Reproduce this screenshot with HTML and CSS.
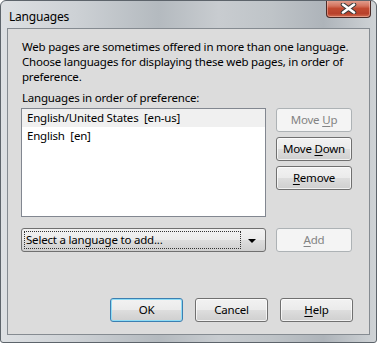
FILE: index.html
```html
<!DOCTYPE html>
<html>
<head>
    <meta charset="UTF-8">
    <title>Languages</title>
    <link rel="stylesheet" href="styles.css">
</head>
<body>
<div class="win">
    <div class="win-title">
        <span class="win-caption">Languages</span>
        <span class="win-close">
            <svg width="17" height="11" viewBox="0 0 17 11">
                <path d="M3 1.5 L14 9.5 M14 1.5 L3 9.5" stroke="#3b3b3b" stroke-width="4.6" stroke-linecap="round"/>
                <path d="M3 1.5 L14 9.5 M14 1.5 L3 9.5" stroke="#ffffff" stroke-width="2.6" stroke-linecap="round"/>
            </svg>
        </span>
    </div>
    <div class="win-client">
        <p class="lg-desc">Web pages are sometimes offered in more than one language.<br>Choose languages for displaying these web pages, in order of<br>preference.</p>
        <div class="lg-label">Languages in order of preference:</div>
        <div class="lg-grid">
            <ul class="lg-list">
                <li class="lg-item sel">English/United States&nbsp; [en-us]</li>
                <li class="lg-item">English&nbsp; [en]</li>
            </ul>
            <div class="lg-side">
                <span class="btn off">Move <u>U</u>p</span>
                <span class="btn">Move <u>D</u>own</span>
                <span class="btn"><u>R</u>emove</span>
            </div>
            <div class="combo">
                <span class="combo-text">Select a language to add...</span>
                <span class="combo-arrow"></span>
            </div>
            <div class="lg-side">
                <span class="btn off"><u>A</u>dd</span>
            </div>
        </div>
        <div class="lg-foot">
            <span class="btn def">OK</span>
            <span class="btn">Cancel</span>
            <span class="btn"><u>H</u>elp</span>
        </div>
    </div>
</div>
</body>
</html>
```

FILE: styles.css
```css
body, p, ul, li, div {
    margin: 0;
    padding: 0;
}
body {
    font-family: "Noto Sans", "Open Sans", sans-serif;
    font-size: 11.5px;
    letter-spacing: -0.2px;
    color: #000;
    background: #fff;
}

.win {
    width: 377px;
    height: 343px;
    box-sizing: border-box;
    border: 1px solid #5d646b;
    border-radius: 6px 6px 3px 3px;
    background: linear-gradient(to right, #dde0e3 0, #cdd1d5 20%, #b4babf 42%, #c8ccd0 58%, #bfc4c8 72%, #aeb4ba 86%, #cfd3d6 100%);
    display: flex;
    flex-direction: column;
    overflow: hidden;
}
.win-title {
    height: 27px;
    display: flex;
    justify-content: space-between;
    align-items: flex-start;
    padding-left: 8px;
}
.win-caption {
    font-size: 12px;
    line-height: 14px;
    margin-top: 9px;
    color: #000;
}
.win-close {
    width: 45px;
    height: 18px;
    margin-top: -1px;
    margin-right: 5px;
    box-sizing: border-box;
    border: 1px solid #4b2b27;
    border-top: 0;
    border-radius: 0 0 4px 4px;
    background: linear-gradient(to bottom, #e3a595 0, #d4735e 35%, #c14a31 50%, #b8412b 80%, #d06d51 100%);
    box-shadow: inset 0 0 0 1px rgba(255, 210, 200, 0.45);
    display: flex;
    align-items: center;
    justify-content: center;
}
.win-client {
    flex: 1;
    margin: 0 6px 7px 6px;
    border: 1px solid #858b91;
    background: #dcdcdc;
    padding: 10px 16px 0 13px;
    display: flex;
    flex-direction: column;
}

.lg-desc {
    line-height: 15px;
    padding-left: 1px;
    white-space: nowrap;
}
.lg-label {
    line-height: 15px;
    margin-top: 6px;
    padding-left: 1px;
}
.lg-grid {
    margin-top: 3px;
    display: grid;
    grid-template-columns: 245px 76px;
    column-gap: 10px;
    row-gap: 11px;
}
.lg-list {
    list-style: none;
    height: 109px;
    box-sizing: border-box;
    border: 1px solid #828790;
    background: #fff;
}
.lg-item {
    height: 18px;
    line-height: 18px;
    padding-left: 5px;
}
.lg-item.sel {
    background: #f0f0f0;
}
.lg-side {
    display: flex;
    flex-direction: column;
    gap: 5px;
}

.btn {
    display: block;
    text-align: center;
    height: 24px;
    line-height: 21px;
    box-sizing: border-box;
    border: 1px solid #707070;
    border-radius: 3px;
    background: linear-gradient(to bottom, #f2f2f2 0, #ebebeb 48%, #dddddd 52%, #cfcfcf 100%);
    box-shadow: inset 0 0 0 1px rgba(255, 255, 255, 0.7);
    color: #000;
}
.btn u {
    text-underline-offset: 2px;
}
.btn.off {
    border-color: #adb2b5;
    background: #f4f4f4;
    color: #838383;
    box-shadow: none;
}
.btn.def {
    border-color: #3c7fb1;
    box-shadow: inset 0 0 0 1px #8fdcf5;
}

.combo {
    height: 24px;
    box-sizing: border-box;
    border: 1px solid #707070;
    border-radius: 3px;
    background: linear-gradient(to bottom, #f2f2f2 0, #ebebeb 48%, #dddddd 52%, #cfcfcf 100%);
    display: flex;
    align-items: center;
    padding: 2px;
}
.combo-text {
    flex: 1;
    height: 18px;
    line-height: 16px;
    box-sizing: border-box;
    border: 1px dotted #333;
    padding-left: 1px;
}
.combo-arrow {
    width: 22px;
    display: flex;
    justify-content: center;
}
.combo-arrow::before {
    content: "";
    border-left: 4px solid transparent;
    border-right: 4px solid transparent;
    border-top: 4px solid #000;
    margin-top: 2px;
}

.lg-foot {
    margin-top: auto;
    margin-bottom: 12px;
    display: flex;
    justify-content: flex-end;
    gap: 12px;
}
.lg-foot .btn {
    width: 73px;
}
```
